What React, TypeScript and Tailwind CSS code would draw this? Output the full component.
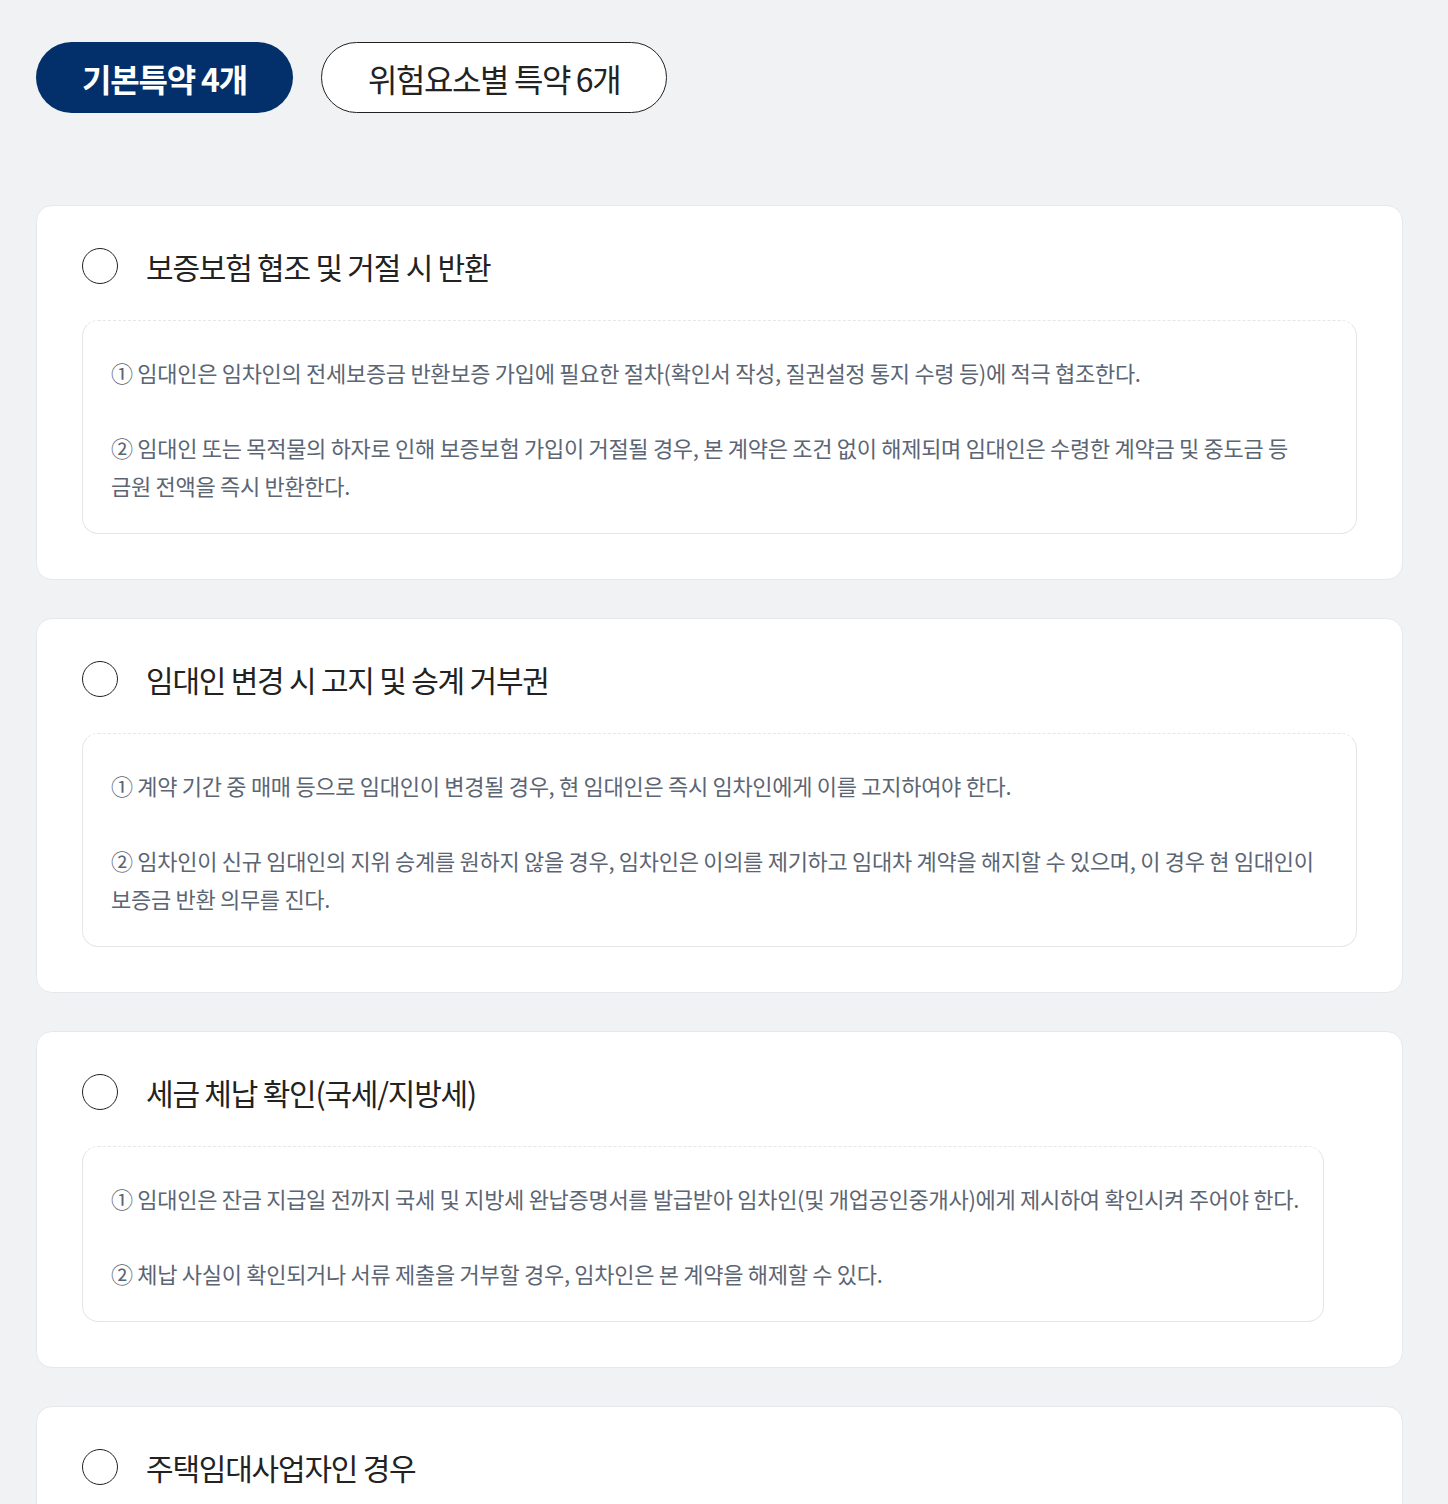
const FONT = "font-['Pretendard','Noto_Sans_CJK_KR',sans-serif]";

interface Clause {
  title: string;
  items: string[];
}

const clauses: Clause[] = [
  {
    title: "보증보험 협조 및 거절 시 반환",
    items: [
      "① 임대인은 임차인의 전세보증금 반환보증 가입에 필요한 절차(확인서 작성, 질권설정 통지 수령 등)에 적극 협조한다.",
      "② 임대인 또는 목적물의 하자로 인해 보증보험 가입이 거절될 경우, 본 계약은 조건 없이 해제되며 임대인은 수령한 계약금 및 중도금 등 금원 전액을 즉시 반환한다.",
    ],
  },
  {
    title: "임대인 변경 시 고지 및 승계 거부권",
    items: [
      "① 계약 기간 중 매매 등으로 임대인이 변경될 경우, 현 임대인은 즉시 임차인에게 이를 고지하여야 한다.",
      "② 임차인이 신규 임대인의 지위 승계를 원하지 않을 경우, 임차인은 이의를 제기하고 임대차 계약을 해지할 수 있으며, 이 경우 현 임대인이 보증금 반환 의무를 진다.",
    ],
  },
  {
    title: "세금 체납 확인(국세/지방세)",
    items: [
      "① 임대인은 잔금 지급일 전까지 국세 및 지방세 완납증명서를 발급받아 임차인(및 개업공인중개사)에게 제시하여 확인시켜 주어야 한다.",
      "② 체납 사실이 확인되거나 서류 제출을 거부할 경우, 임차인은 본 계약을 해제할 수 있다.",
    ],
  },
  {
    title: "주택임대사업자인 경우",
    items: [],
  },
];

const ClauseCard = ({ clause }: { clause: Clause }) => (
  <div className="rounded-2xl border border-[#e6e8eb] bg-white px-[45px] pt-[42px] pb-[45px]">
    <div className="flex items-center gap-[28px]">
      <span className="h-9 w-9 shrink-0 rounded-full border border-[#222]" />
      <h3 className="text-[30px] leading-9 tracking-[-1.2px] text-[#222]">{clause.title}</h3>
    </div>
    {clause.items.length > 0 && (
      <div className="mt-9 w-fit max-w-full rounded-2xl border border-[#e4e6e9] [border-top-style:dashed] pl-7 pr-6 pt-[32px] pb-[29px]">
        <div className="flex flex-col gap-[37px]">
          {clause.items.map((item) => (
            <p key={item} className="break-keep text-[22px] leading-[38px] tracking-[-0.3px] text-[#5b6573]">
              {item}
            </p>
          ))}
        </div>
      </div>
    )}
  </div>
);

export default function App() {
  return (
    <div className={`min-h-screen bg-[#f0f2f4] pl-9 pr-[45px] pt-[42px] pb-10 ${FONT}`}>
      <div className="flex gap-7">
        <button className="h-[71px] rounded-full bg-[#03306a] px-[46px] text-[32px] font-bold tracking-[-1.2px] text-white">
          기본특약 4개
        </button>
        <button className="h-[71px] rounded-full border border-[#222] bg-white px-[46px] text-[32px] tracking-[-1.4px] text-[#222]">
          위험요소별 특약 6개
        </button>
      </div>

      <div className="mt-[92px] flex flex-col gap-[38px]">
        {clauses.map((c) => (
          <ClauseCard key={c.title} clause={c} />
        ))}
      </div>
    </div>
  );
}
